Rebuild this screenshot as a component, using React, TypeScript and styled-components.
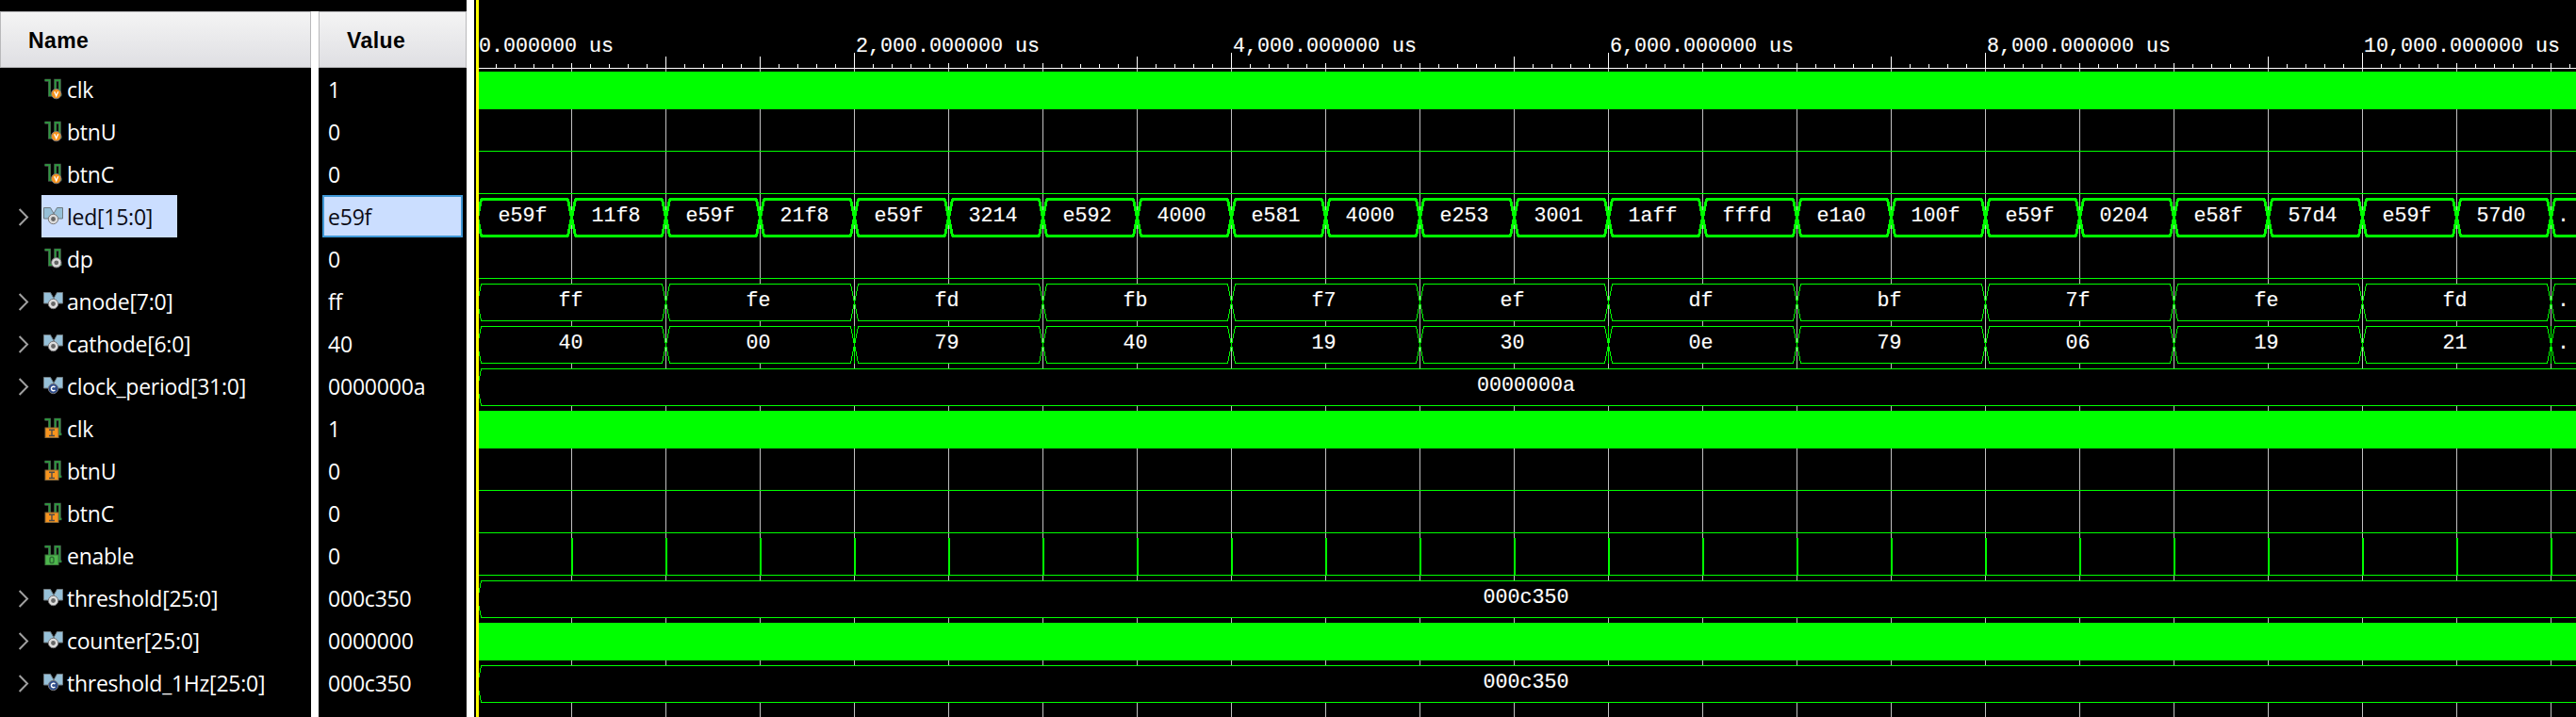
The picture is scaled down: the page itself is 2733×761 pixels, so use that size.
import React from "react";
import styled, { createGlobalStyle, css } from "styled-components";

const GlobalStyle = createGlobalStyle`
  html, body { margin: 0; background: #000; overflow: hidden; }
`;

const GREEN = "#00ff00";
const GRID = "#c0c0c0";
const ROW = 45;
const START = 508;
const WIDTH = 2225;
const END = START + WIDTH;

type IconKind = "varBit" | "sigBit" | "inBit" | "outBit" | "sigBus" | "constBus";
type Wave =
  | { type: "solid" }
  | { type: "low" }
  | { type: "pulses" }
  | { type: "bus"; step: number; values: string[]; bold?: boolean; glitches?: number[] };

interface Signal {
  name: string;
  value: string;
  icon: IconKind;
  wave: Wave;
  selected?: boolean;
}

const signals: Signal[] = [
  { name: "clk", value: "1", icon: "varBit", wave: { type: "solid" } },
  { name: "btnU", value: "0", icon: "varBit", wave: { type: "low" } },
  { name: "btnC", value: "0", icon: "varBit", wave: { type: "low" } },
  {
    name: "led[15:0]", value: "e59f", icon: "sigBus", selected: true,
    wave: {
      type: "bus", step: 100, bold: true,
      values: ["e59f", "11f8", "e59f", "21f8", "e59f", "3214", "e592", "4000", "e581", "4000", "e253", "3001",
        "1aff", "fffd", "e1a0", "100f", "e59f", "0204", "e58f", "57d4", "e59f", "57d0", "."],
    },
  },
  { name: "dp", value: "0", icon: "sigBit", wave: { type: "low" } },
  {
    name: "anode[7:0]", value: "ff", icon: "sigBus",
    wave: { type: "bus", step: 200, values: ["ff", "fe", "fd", "fb", "f7", "ef", "df", "bf", "7f", "fe", "fd", "."] },
  },
  {
    name: "cathode[6:0]", value: "40", icon: "sigBus",
    wave: {
      type: "bus", step: 200, glitches: [906, 1706, 2706],
      values: ["40", "00", "79", "40", "19", "30", "0e", "79", "06", "19", "21", "."],
    },
  },
  { name: "clock_period[31:0]", value: "0000000a", icon: "constBus", wave: { type: "bus", step: 4000, values: ["0000000a"] } },
  { name: "clk", value: "1", icon: "inBit", wave: { type: "solid" } },
  { name: "btnU", value: "0", icon: "inBit", wave: { type: "low" } },
  { name: "btnC", value: "0", icon: "inBit", wave: { type: "low" } },
  { name: "enable", value: "0", icon: "outBit", wave: { type: "pulses" } },
  { name: "threshold[25:0]", value: "000c350", icon: "sigBus", wave: { type: "bus", step: 4000, values: ["000c350"] } },
  { name: "counter[25:0]", value: "0000000", icon: "sigBus", wave: { type: "solid" } },
  { name: "threshold_1Hz[25:0]", value: "000c350", icon: "constBus", wave: { type: "bus", step: 4000, values: ["000c350"] } },
];

const Window = styled.div`
  display: flex;
  width: 2733px;
  height: 761px;
  background: #000;
  overflow: hidden;
`;

const Table = styled.div`
  display: flex;
  width: 495px;
  flex: none;
  box-sizing: border-box;
  padding-top: 12px;
`;

const Column = styled.div<{ $width: number }>`
  width: ${(p) => p.$width}px;
  flex: none;
`;

const Divider = styled.div`
  width: 8px;
  flex: none;
  background: #fff;
`;

const Header = styled.div<{ $pad: number }>`
  box-sizing: border-box;
  height: 60px;
  padding: 1px 0 0 ${(p) => p.$pad}px;
  border: 1px solid #b9b9bb;
  background: linear-gradient(#f4f4f4, #dfdfe3);
  color: #000;
  font: bold 23px/58px "Liberation Sans", Arial, sans-serif;
  letter-spacing: 0.4px;
`;

const rowFont = css`
  font-family: "Open Sans", "Noto Sans", sans-serif;
  font-size: 23px;
  line-height: 45px;
  white-space: pre;
`;

const NameRow = styled.div`
  display: flex;
  height: 45px;
`;

const Twisty = styled.div`
  width: 44px;
  flex: none;
`;

const NameCell = styled.div<{ $selected?: boolean }>`
  display: flex;
  height: 45px;
  min-width: 0;
  ${(p) => p.$selected && "width: 144px;"}
  background: ${(p) => (p.$selected ? "#cbdeff" : "transparent")};
  color: ${(p) => (p.$selected ? "#0a0a14" : "#fff")};
`;

const NameText = styled.span`
  ${rowFont}
  margin-left: 3px;
  padding-top: 1px;
  height: 44px;
  letter-spacing: -0.25px;
`;

const ValueCell = styled.div<{ $selected?: boolean }>`
  ${rowFont}
  box-sizing: border-box;
  height: 45px;
  margin: 0 4px;
  padding: 1px 0 0 6px;
  color: #fff;
  letter-spacing: -0.2px;
  ${(p) =>
    p.$selected &&
    css`
      padding: 0 0 0 4px;
      border: 2px solid #3f97d5;
      line-height: 43px;
      background: #cbdeff;
      color: #0a0a14;
    `}
`;

const WavePanel = styled.div`
  flex: none;
  box-sizing: border-box;
  width: 2230px;
  margin-left: 2px;
  border-left: 3px solid #ffff00;
  overflow: hidden;
`;

const WaveSvg = styled.svg`
  display: block;
  shape-rendering: crispEdges;
`;

const monoFont = css`
  font-family: "Liberation Mono", "Courier New", monospace;
  font-size: 21.67px;
  color: #fff;
  white-space: pre;
  -webkit-text-stroke: 0.15px #fff;
`;

const Ruler = styled.div`
  height: 73px;
`;

const RulerLabels = styled.div`
  display: flex;
  height: 56px;
  box-sizing: border-box;
  padding: 38px 0 0 0;
`;

const RulerLabel = styled.span<{ $width: number }>`
  ${monoFont}
  flex: none;
  width: ${(p) => p.$width}px;
  line-height: 24px;
`;

const Track = styled.div`
  position: relative;
  height: 45px;
`;

const TrackLabels = styled.div`
  position: absolute;
  inset: 0;
  display: flex;
`;

const BusLabel = styled.span<{ $width: number; $shift: number }>`
  ${monoFont}
  flex: none;
  box-sizing: border-box;
  width: ${(p) => p.$width}px;
  padding-right: ${(p) => p.$shift}px;
  text-align: center;
  line-height: 44px;
`;

const gridXs = Array.from({ length: 22 }, (_, i) => 606 + i * 100);

function Bit({ badge }: { badge: React.ReactNode }) {
  return (
    <>
      <path d="M3.5 13.2h5v16h6.2v-16h4.6v15.6h2" fill="none" stroke="#4a4a4a" strokeWidth="3" />
      <path d="M3.5 13.2h5v16h6.2v-16h4.6v15.6h2" fill="none" stroke="#2b9a3e" strokeWidth="1.7" />
      {badge}
    </>
  );
}

function Bus({ badge }: { badge: React.ReactNode }) {
  return (
    <>
      <path d="M2.5 13.5h7l4 7-4 4.5h-7zM22.5 13.5h-6l-4 7 4 4.5h6z" fill="#96c0d8" stroke="#6f7a80" strokeWidth="1" />
      {badge}
    </>
  );
}

function RoundBadge({ cx, cy, fill, letter }: { cx: number; cy: number; fill: string; letter?: string }) {
  return (
    <>
      <circle cx={cx} cy={cy} r="5.2" fill={fill} stroke="#77777a" strokeWidth="1" />
      {letter === "V" && <path d={`M${cx - 2} ${cy - 2.4}l2 4.6 2-4.6`} fill="none" stroke="#fff" strokeWidth="1.3" />}
      {letter === "C" && <path d={`M${cx + 1.9} ${cy - 1.3}a2.2 2.2 0 1 0 0 2.6`} fill="none" stroke="#fff" strokeWidth="1.4" />}
      {!letter && <circle cx={cx} cy={cy} r="2.4" fill="#666" />}
    </>
  );
}

const IconSvg = styled.svg`
  flex: none;
`;

function SignalIcon({ kind }: { kind: IconKind }) {
  return (
    <IconSvg width="24" height="45" viewBox="0 0 24 45">
      {kind === "varBit" && <Bit badge={<RoundBadge cx={15.7} cy={27.6} fill="#f7941e" letter="V" />} />}
      {kind === "sigBit" && <Bit badge={<RoundBadge cx={15.8} cy={26.8} fill="#d9d9d9" />} />}
      {kind === "inBit" && (
        <Bit
          badge={
            <>
              <rect x="4" y="22" width="14" height="10.5" fill="#f7941e" stroke="#8a6a3a" strokeWidth="1" />
              <path d="M8 24.2h6M11 24.2v6.3M8 30.5h6" fill="none" stroke="#4c4c4c" strokeWidth="1.4" />
            </>
          }
        />
      )}
      {kind === "outBit" && (
        <Bit
          badge={
            <>
              <rect x="4" y="22" width="14" height="10.5" fill="#4cb64c" stroke="#3d7a3d" strokeWidth="1" />
              <rect x="9" y="24.2" width="4" height="6.4" rx="1.8" fill="none" stroke="#2f6d35" strokeWidth="1.5" />
            </>
          }
        />
      )}
      {kind === "sigBus" && <Bus badge={<RoundBadge cx={12.5} cy={25.5} fill="#dcdcdc" />} />}
      {kind === "constBus" && <Bus badge={<RoundBadge cx={12.5} cy={25.5} fill="#2f4d8c" letter="C" />} />}
    </IconSvg>
  );
}

function Chevron() {
  return (
    <svg width="44" height="45" viewBox="0 0 44 45">
      <path d="M20.6 15l8.4 8.5-8.4 8.5" fill="none" stroke="#a0a0a0" strokeWidth="2" />
    </svg>
  );
}

function TimeRuler() {
  const ticks = Array.from({ length: 111 }, (_, i) => 526 + i * 20);
  const tickTop = (x: number) => {
    const n = (x - 506) / 100;
    if (n % 4 === 0) return 56;
    if (n === 2 || n === 3 || (n > 4 && n % 4 === 3)) return 60;
    return Number.isInteger(n) ? 67 : 68;
  };
  return (
    <Ruler>
      <RulerLabels>
        {["0.000000 us", "2,000.000000 us", "4,000.000000 us", "6,000.000000 us", "8,000.000000 us", "10,000.000000 us"].map((t, i) => (
          <RulerLabel key={t} $width={400}>{t}</RulerLabel>
        ))}
      </RulerLabels>
      <WaveSvg width={WIDTH} height={17} viewBox={`${START} 56 ${WIDTH} 17`}>
        <rect x={START} y={72} width={WIDTH} height={1} fill="#fff" />
        {ticks.map((x) => (
          <rect key={x} x={x} y={tickTop(x)} width={1} height={72 - tickTop(x)} fill="#fff" />
        ))}
      </WaveSvg>
    </Ruler>
  );
}

function Grid({ height }: { height: number }) {
  return (
    <>
      {gridXs.map((x) => (
        <rect key={x} x={x} y={0} width={1} height={height} fill={GRID} />
      ))}
    </>
  );
}

function BusShape({ wave }: { wave: Extract<Wave, { type: "bus" }> }) {
  return (
    <>
      {wave.values.map((_, i) => {
        const a = 506.5 + i * wave.step;
        const b = a + wave.step;
        return (
          <path
            key={i}
            d={`M${a} 23L${a + 4} 3.5H${b - 4}L${b} 23L${b - 4} 42.5H${a + 4}Z`}
            fill="#000"
            stroke={GREEN}
            strokeWidth={wave.bold ? 3 : 1}
            strokeLinejoin="bevel"
          />
        );
      })}
      {wave.glitches?.map((x) => <rect key={x} x={x} y={3} width={1} height={40} fill={GREEN} />)}
    </>
  );
}

function WaveTrack({ wave }: { wave: Wave }) {
  return (
    <Track>
      <WaveSvg width={WIDTH} height={ROW} viewBox={`${START} 0 ${WIDTH} ${ROW}`}>
        <Grid height={ROW} />
        {wave.type === "solid" && <rect x={START} y={3} width={WIDTH} height={40} fill={GREEN} />}
        {(wave.type === "low" || wave.type === "pulses") && (
          <rect x={START} y={42} width={WIDTH} height={1} fill={GREEN} />
        )}
        {wave.type === "pulses" && gridXs.map((x) => <rect key={x} x={x} y={3} width={2} height={39} fill={GREEN} />)}
        {wave.type === "bus" && <BusShape wave={wave} />}
      </WaveSvg>
      {wave.type === "bus" && (
        <TrackLabels>
          {wave.values.map((v, i) => {
            const left = Math.max(START, 506 + i * wave.step);
            const right = Math.min(END, 506 + (i + 1) * wave.step);
            return (
              <BusLabel key={i} $width={right - left} $shift={v === "." ? 0 : wave.step === 100 ? 5 : 3}>{v}</BusLabel>
            );
          })}
        </TrackLabels>
      )}
    </Track>
  );
}

export default function App() {
  return (
    <Window>
      <GlobalStyle />
      <Table>
        <Column $width={330}>
          <Header $pad={29}>Name</Header>
          {signals.map((s, i) => (
            <NameRow key={i}>
              <Twisty>{s.icon.endsWith("Bus") && <Chevron />}</Twisty>
              <NameCell $selected={s.selected}>
                <SignalIcon kind={s.icon} />
                <NameText>{s.name}</NameText>
              </NameCell>
            </NameRow>
          ))}
        </Column>
        <Divider />
        <Column $width={157}>
          <Header $pad={29}>Value</Header>
          {signals.map((s, i) => (
            <ValueCell key={i} $selected={s.selected}>{s.value}</ValueCell>
          ))}
        </Column>
      </Table>
      <Divider />
      <WavePanel>
        <TimeRuler />
        {signals.map((s, i) => (
          <WaveTrack key={i} wave={s.wave} />
        ))}
        <WaveSvg width={WIDTH} height={13} viewBox={`${START} 0 ${WIDTH} 13`}>
          <Grid height={13} />
        </WaveSvg>
      </WavePanel>
    </Window>
  );
}
